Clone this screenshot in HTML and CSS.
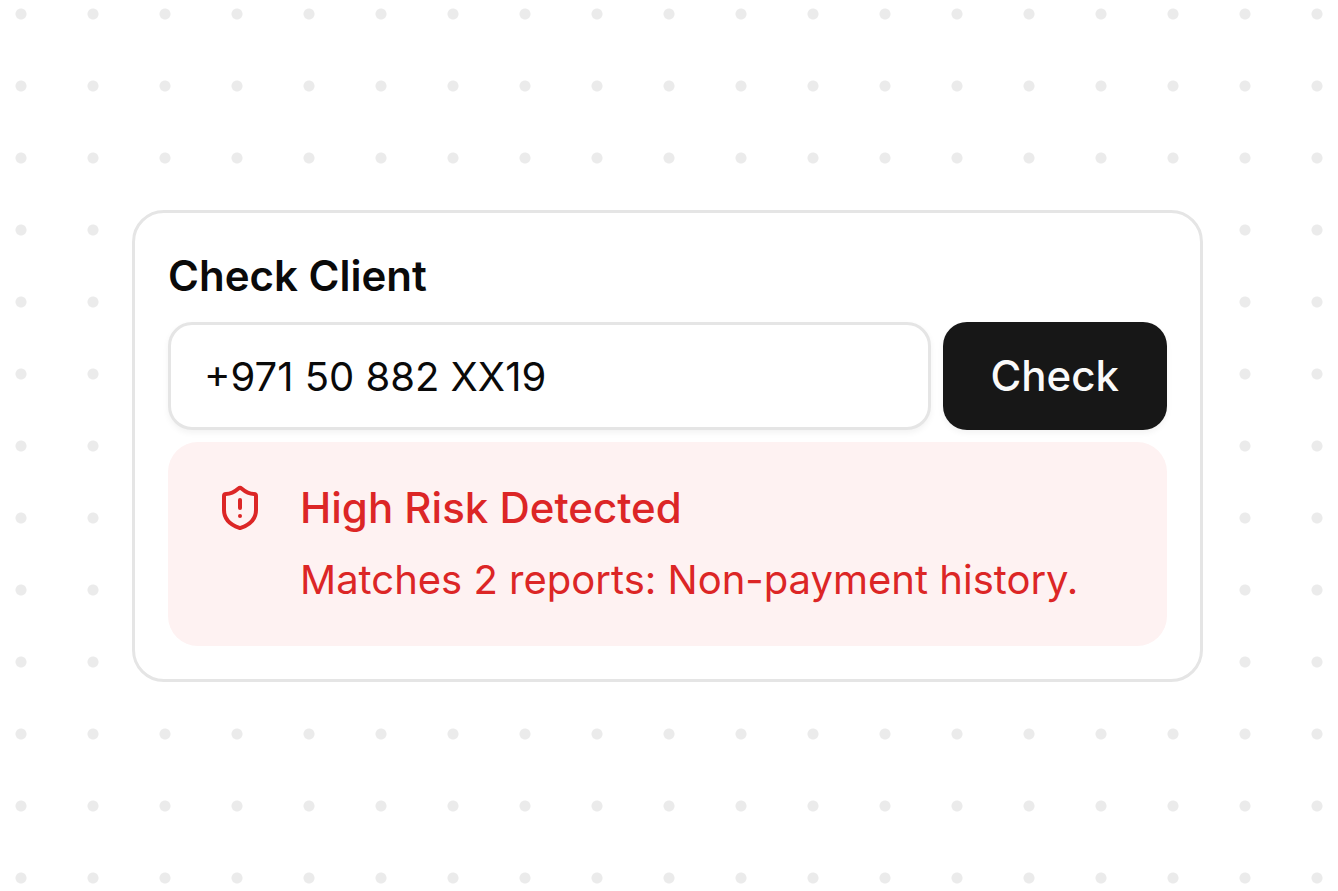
FILE: index.html
```html
<!DOCTYPE html>
<html lang="en">
<head>
    <meta charset="UTF-8">
    <meta name="viewport" content="width=device-width, initial-scale=1.0">
    <title>Check Client</title>
    <link rel="stylesheet" href="styles.css">
</head>
<body>
    <main class="card">
        <form class="check-form">
            <label class="title" for="phone">Check Client</label>
            <div class="row">
                <input class="phone" type="text" id="phone" value="+971 50 882 XX19">
                <button class="check-btn" type="button">Check</button>
            </div>
        </form>
        <div class="alert" role="alert">
            <svg class="alert-icon" viewBox="0 0 24 24" fill="none" stroke="currentColor" stroke-width="2" stroke-linecap="round" stroke-linejoin="round" aria-hidden="true">
                <path d="M20 13c0 5-3.5 7.5-7.66 8.95a1 1 0 0 1-.67-.01C7.5 20.5 4 18 4 13V6a1 1 0 0 1 1-1c2 0 4.5-1.2 6.24-2.72a1.17 1.17 0 0 1 1.52 0C14.51 3.81 17 5 19 5a1 1 0 0 1 1 1z"/>
                <path d="M12 8v4"/>
                <path d="M12 16h.01"/>
            </svg>
            <div class="alert-body">
                <div class="alert-title">High Risk Detected</div>
                <div class="alert-text">Matches 2 reports: Non-payment history.</div>
            </div>
        </div>
    </main>
</body>
</html>
```
FILE: styles.css
```css
* {
    box-sizing: border-box;
}
body {
    margin: 0;
    padding: 210px 135px 0 132px;
    min-height: 100vh;
    font-family: Inter, "Liberation Sans", sans-serif;
    font-size: 42px;
    line-height: 60px;
    color: #0a0a0a;
    background-color: #fff;
    background-image: radial-gradient(circle at center, #ebebeb 5px, transparent 6px);
    background-size: 72px 72px;
    background-position: -15px -22px;
}
.card {
    display: flex;
    flex-direction: column;
    gap: 12px;
    padding: 33px;
    background: #fff;
    border: 3px solid #e5e5e5;
    border-radius: 32px;
}
.check-form {
    display: flex;
    flex-direction: column;
    gap: 16px;
}
.title {
    font-weight: 600;
}
.row {
    display: flex;
    gap: 12px;
}
.phone,
.check-btn {
    height: 108px;
    font: inherit;
    border-radius: 24px;
    box-shadow: 0 3px 6px rgba(0, 0, 0, 0.05);
}
.phone {
    flex: 1;
    min-width: 0;
    padding: 0 33px;
    font-size: 40px;
    color: #0a0a0a;
    background: #fff;
    border: 3px solid #e5e5e5;
}
.check-btn {
    padding: 0 48px;
    font-weight: 500;
    color: #fafafa;
    background: #171717;
    border: none;
    cursor: pointer;
}
.alert {
    display: flex;
    gap: 36px;
    padding: 36px 48px;
    color: #dc2626;
    background: #fef2f2;
    border-radius: 30px;
}
.alert-icon {
    flex: none;
    width: 48px;
    height: 48px;
    margin-top: 6px;
}
.alert-body {
    display: flex;
    flex-direction: column;
    gap: 12px;
}
.alert-title {
    font-weight: 500;
}
.alert-text {
    font-size: 40px;
}
```
